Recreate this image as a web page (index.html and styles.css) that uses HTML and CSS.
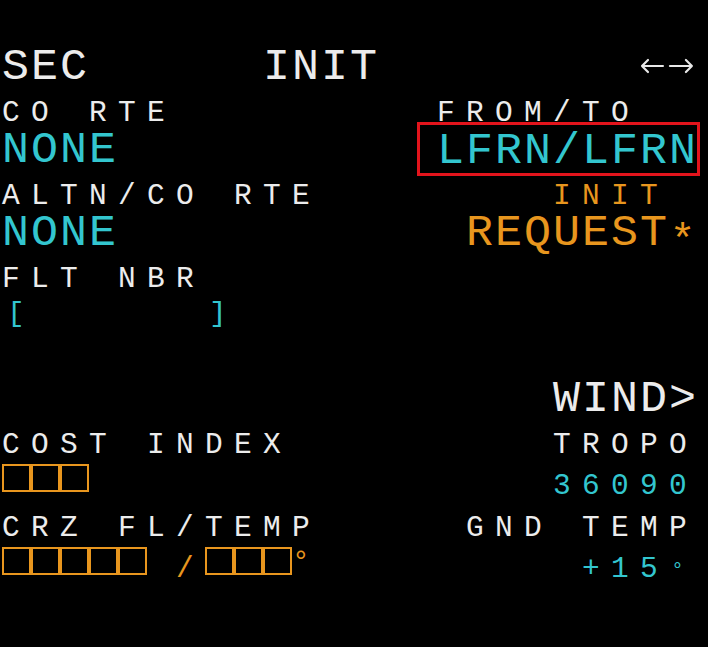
FILE: index.html
```html
<!DOCTYPE html>
<html lang="en">
<head>
<meta charset="utf-8">
<title>MCDU SEC INIT</title>
<link rel="stylesheet" href="styles.css">
</head>
<body>
<div class="mcdu">
  <div class="row">
    <span class="cell w">SEC      INIT         </span>
    <svg class="arrows" width="58" height="30" viewBox="0 0 58 30" aria-hidden="true">
      <path d="M2 15H23M2 15L8 9M2 15L8 21M30 15H52M52 15L46 9M52 15L46 21" fill="none" stroke="#e8e8e8" stroke-width="2.2" stroke-linecap="round"/>
    </svg>
  </div>
  <div class="row">
    <span class="cell"><span class="s w">CO RTE</span></span>
    <span class="cell"><span class="s w">FROM/TO  </span></span>
  </div>
  <div class="row">
    <span class="cell c">NONE</span>
    <span class="cell c"><span class="hl">LFRN/LFRN</span></span>
  </div>
  <div class="row">
    <span class="cell"><span class="s w">ALTN/CO RTE</span></span>
    <span class="cell"><span class="s o">INIT </span></span>
  </div>
  <div class="row">
    <span class="cell c">NONE</span>
    <span class="cell o">REQUEST<span class="ast">*</span></span>
  </div>
  <div class="row">
    <span class="cell"><span class="s w">FLT NBR</span></span>
  </div>
  <div class="row">
    <span class="cell"><span class="s c"><span class="brk-l">[</span>      <span class="brk-r">]</span></span></span>
  </div>
  <div class="row"></div>
  <div class="row">
    <span class="cell"></span>
    <span class="cell w">WIND&gt;</span>
  </div>
  <div class="row">
    <span class="cell"><span class="s w">COST INDEX</span></span>
    <span class="cell"><span class="s w">TROPO</span></span>
  </div>
  <div class="row">
    <span class="cell"><span class="box"></span><span class="box"></span><span class="box"></span></span>
    <span class="cell"><span class="s c">36090</span></span>
  </div>
  <div class="row">
    <span class="cell"><span class="s w">CRZ FL/TEMP</span></span>
    <span class="cell"><span class="s w">GND TEMP</span></span>
  </div>
  <div class="row">
    <span class="cell"><span class="box"></span><span class="box"></span><span class="box"></span><span class="box"></span><span class="box"></span><span class="s o"> /</span><span class="box"></span><span class="box"></span><span class="box"></span><span class="s o deg">°</span></span>
    <span class="cell"><span class="s c">+15<span class="deg-low">°</span></span></span>
  </div>
  <div class="row"></div>
</div>
</body>
</html>
```

FILE: styles.css
```css
html, body {
  margin: 0;
  padding: 0;
  background: #000;
}

body {
  width: 708px;
  height: 647px;
  overflow: hidden;
}

.mcdu {
  padding: 47.25px 0 0 2px;
  font-family: "Liberation Mono", "DejaVu Sans Mono", monospace;
  font-size: 45px;
  letter-spacing: 2px;
  line-height: 41.5px;
}

.row {
  width: 696px;
  height: 41.5px;
  display: flex;
  justify-content: space-between;
  align-items: flex-start;
  white-space: pre;
}

.cell {
  display: block;
  white-space: pre;
}

.s {
  font-size: 29.5px;
  letter-spacing: 11.3px;
  line-height: 30px;
}

.w { color: #ececec; }
.c { color: #33c6cf; }
.o { color: #e8961e; }

.hl {
  outline: 3px solid #e3141c;
  outline-offset: -3px;
  margin-left: -20px;
  padding: 3.5px 2px 0 20px;
  margin-right: -2px;
}

.ast {
  display: inline-block;
  transform: translateY(9px) scale(0.95);
}

.brk-l,
.brk-r {
  display: inline-block;
}

.brk-l {
  transform: translate(5px, -6px) scaleY(0.92);
}

.brk-r {
  transform: translate(4px, -6px) scaleY(0.92);
}

.deg {
  display: inline-block;
  transform: translateY(-6px);
}

.deg-low {
  display: inline-block;
  transform: translate(-2px, 1px) scale(0.7);
}

.box {
  display: inline-block;
  width: 29px;
  height: 28px;
  margin-bottom: 2px;
  box-sizing: border-box;
  border: 2px solid #e8961e;
  vertical-align: baseline;
}

.arrows {
  display: block;
  margin-top: 3.5px;
}
```
